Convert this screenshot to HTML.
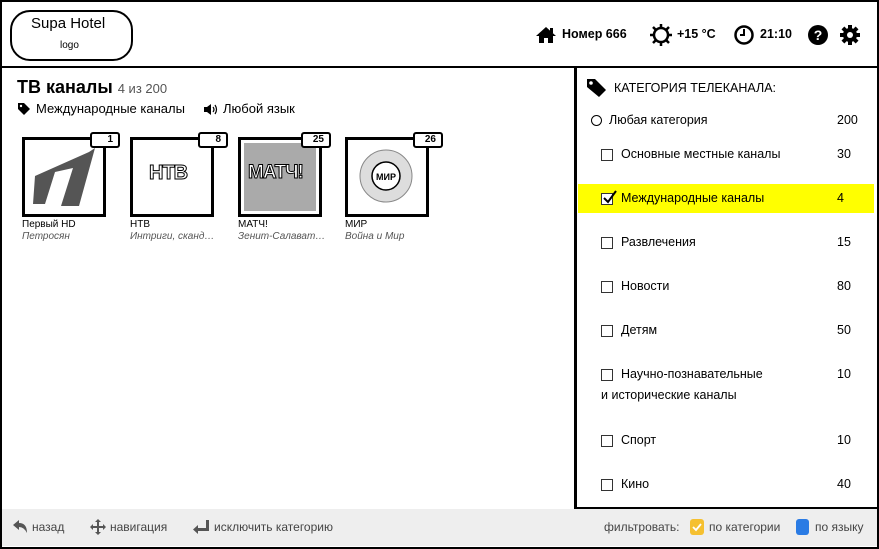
<!DOCTYPE html>
<html><head><meta charset="utf-8"><style>
*{margin:0;padding:0;box-sizing:border-box}
body{width:879px;height:549px;background:#fff;font-family:"Liberation Sans","DejaVu Sans",sans-serif;color:#000;position:relative;overflow:hidden}
.a{position:absolute;white-space:nowrap}
.frame{position:absolute;left:0;top:0;width:879px;height:549px;border:2px solid #000}
.box{position:absolute;border:2px solid #000}
.cnt{font-size:12.5px}
.cb{position:absolute;width:12px;height:12px;border:1.5px solid #333;background:#fff}
.tile{position:absolute;top:137px;width:84px;height:80px;border:3px solid #000;background:#fff}
.badge{position:absolute;top:132px;width:30px;height:16px;border:2px solid #000;border-radius:3px;background:#fff;font-size:10px;font-weight:bold;text-align:right;padding-right:5px;line-height:12px}
.cn{position:absolute;top:219px;font-size:10px}
.cs{position:absolute;top:231px;font-size:10px;font-style:italic;color:#555}
.ft{font-size:12px;color:#444}
</style></head><body>
<div class="frame"></div>
<div class="box" style="left:0;top:66px;width:879px;height:0;border-width:2px 0 0 0"></div>
<div class="box" style="left:10px;top:10px;width:123px;height:51px;border-radius:20px"></div>
<div class="a" style="left:31px;top:15px;font-size:15px">Supa Hotel</div>
<div class="a" style="left:60px;top:40px;font-size:10px">logo</div>

<svg class="a" style="left:535px;top:26px" width="22" height="18" viewBox="0 0 22 18"><path d="M11 1 L1 10 H4 V17 H9 V12 H13 V17 H18 V10 H21 Z" fill="#000"/><rect x="15" y="2" width="3" height="5" fill="#000"/></svg>
<div class="a" style="left:562px;top:27px;font-size:12.5px;font-weight:bold">Номер 666</div>
<svg class="a" style="left:648px;top:22px" width="26" height="26" viewBox="0 0 26 26"><circle cx="13" cy="13" r="7" fill="none" stroke="#000" stroke-width="2.5"/><g stroke="#000" stroke-width="2.5"><path d="M13 2v4M13 20v4M2 13h4M20 13h4M5 5l3 3M18 18l3 3M5 21l3-3M18 8l3-3"/></g></svg>
<div class="a" style="left:677px;top:27px;font-size:12.5px;font-weight:bold">+15 °C</div>
<svg class="a" style="left:733px;top:24px" width="22" height="22" viewBox="0 0 22 22"><circle cx="11" cy="11" r="8.5" fill="none" stroke="#000" stroke-width="2.5"/><path d="M11 5v6H7" fill="none" stroke="#000" stroke-width="2"/></svg>
<div class="a" style="left:760px;top:27px;font-size:12.5px;font-weight:bold">21:10</div>
<svg class="a" style="left:807px;top:24px" width="22" height="22" viewBox="0 0 22 22"><circle cx="11" cy="11" r="10" fill="#000"/><text x="11" y="16" font-size="14" font-weight="bold" text-anchor="middle" fill="#fff" font-family="Liberation Sans">?</text></svg>
<svg class="a" style="left:839px;top:24px" width="22" height="22" viewBox="0 0 22 22"><g fill="#000"><circle cx="11" cy="11" r="7"/><rect x="9" y="1" width="4" height="20"/><rect x="1" y="9" width="20" height="4"/><rect x="9" y="1" width="4" height="20" transform="rotate(45 11 11)"/><rect x="9" y="1" width="4" height="20" transform="rotate(-45 11 11)"/></g><circle cx="11" cy="11" r="3" fill="#fff"/></svg>

<div class="a" style="left:17px;top:77px;font-size:18px;font-weight:bold">ТВ каналы <span style="font-size:13px;font-weight:normal;color:#555">4 из 200</span></div>
<svg class="a" style="left:17px;top:102px" width="14" height="14" viewBox="0 0 14 14"><path d="M1 1H7L13 7L7 13L1 7Z" fill="#000"/><circle cx="4" cy="4" r="1.2" fill="#fff"/></svg>
<div class="a" style="left:36px;top:101px;font-size:13px">Международные каналы</div>
<svg class="a" style="left:203px;top:103px" width="16" height="13" viewBox="0 0 16 13"><path d="M1 4H4L8 1V12L4 9H1Z" fill="#000"/><path d="M10 4Q12 6.5 10 9M12 2Q15 6.5 12 11" fill="none" stroke="#000" stroke-width="1.2"/></svg>
<div class="a" style="left:223px;top:101px;font-size:13px">Любой язык</div>

<div class="tile" style="left:22px"><svg width="78" height="74" viewBox="0 0 78 74"><path d="M10 36L64 12L70 8L54 66L36 66L48 28L30 32L20 64L8 64Z" fill="#555"/></svg></div>
<div class="badge" style="left:90px">1</div>
<div class="cn" style="left:22px">Первый HD</div><div class="cs" style="left:22px">Петросян</div>

<div class="tile" style="left:130px"><div style="position:absolute;left:16px;top:22px;font-size:20px;font-weight:bold;color:#fff;-webkit-text-stroke:1px #000;letter-spacing:-1px">НТВ</div></div>
<div class="badge" style="left:198px">8</div>
<div class="cn" style="left:130px">НТВ</div><div class="cs" style="left:130px">Интриги, сканд…</div>

<div class="tile" style="left:238px"><div style="position:absolute;left:3px;top:3px;width:72px;height:68px;background:#aaa"></div><div style="position:absolute;left:7px;top:22px;font-size:19px;font-weight:bold;color:#fff;-webkit-text-stroke:1px #000;letter-spacing:-1px">МАТЧ!</div></div>
<div class="badge" style="left:301px">25</div>
<div class="cn" style="left:238px">МАТЧ!</div><div class="cs" style="left:238px">Зенит-Салават…</div>

<div class="tile" style="left:345px"><svg width="78" height="74" viewBox="0 0 78 74"><circle cx="38" cy="36" r="26" fill="#ddd" stroke="#888"/><circle cx="38" cy="36" r="14" fill="#fff" stroke="#000" stroke-width="1.5"/><text x="38" y="40" font-size="9" font-weight="bold" text-anchor="middle" font-family="Liberation Sans">МИР</text></svg></div>
<div class="badge" style="left:413px">26</div>
<div class="cn" style="left:345px">МИР</div><div class="cs" style="left:345px">Война и Мир</div>

<div class="box" style="left:574px;top:66px;width:305px;height:443px;border-width:0 2px 2px 3px"></div>
<svg class="a" style="left:586px;top:78px" width="22" height="20" viewBox="0 0 22 20"><path d="M1 1H9L20 12L13 19L1 9Z" fill="#000"/><circle cx="5" cy="5" r="1.8" fill="#fff"/></svg>
<div class="a" style="left:614px;top:81px;font-size:12.5px">КАТЕГОРИЯ ТЕЛЕКАНАЛА:</div>
<div class="a" style="left:591px;top:115px;width:11px;height:11px;border:1.5px solid #000;border-radius:50%"></div>
<div class="a cnt" style="left:609px;top:113px">Любая категория</div><div class="a cnt" style="left:837px;top:113px">200</div>

<div class="a" style="left:578px;top:184px;width:296px;height:29px;background:#ffff00"></div>

<div class="cb" style="left:601px;top:149px"></div><div class="a cnt" style="left:621px;top:147px">Основные местные каналы</div><div class="a cnt" style="left:837px;top:147px">30</div>
<div class="cb" style="left:601px;top:193px"></div><svg class="a" style="left:601px;top:189px" width="16" height="16"><path d="M3 9L7 13L15 2" fill="none" stroke="#000" stroke-width="2"/></svg><div class="a cnt" style="left:621px;top:191px">Международные каналы</div><div class="a cnt" style="left:837px;top:191px">4</div>
<div class="cb" style="left:601px;top:237px"></div><div class="a cnt" style="left:621px;top:235px">Развлечения</div><div class="a cnt" style="left:837px;top:235px">15</div>
<div class="cb" style="left:601px;top:281px"></div><div class="a cnt" style="left:621px;top:279px">Новости</div><div class="a cnt" style="left:837px;top:279px">80</div>
<div class="cb" style="left:601px;top:325px"></div><div class="a cnt" style="left:621px;top:323px">Детям</div><div class="a cnt" style="left:837px;top:323px">50</div>
<div class="cb" style="left:601px;top:369px"></div><div class="a cnt" style="left:621px;top:367px">Научно-познавательные</div><div class="a cnt" style="left:837px;top:367px">10</div>
<div class="a cnt" style="left:601px;top:388px">и исторические каналы</div>
<div class="cb" style="left:601px;top:435px"></div><div class="a cnt" style="left:621px;top:433px">Спорт</div><div class="a cnt" style="left:837px;top:433px">10</div>
<div class="cb" style="left:601px;top:479px"></div><div class="a cnt" style="left:621px;top:477px">Кино</div><div class="a cnt" style="left:837px;top:477px">40</div>

<div class="a" style="left:2px;top:509px;width:875px;height:37px;background:#eeeeee"></div>
<svg class="a" style="left:12px;top:519px" width="16" height="16" viewBox="0 0 16 16"><path d="M1 6L7 1V4Q15 4 15 14Q12 8 7 8V11Z" fill="#555"/></svg>
<div class="a ft" style="left:32px;top:520px">назад</div>
<svg class="a" style="left:90px;top:519px" width="16" height="16" viewBox="0 0 16 16"><path d="M8 0L11 3H9V7H13V5L16 8L13 11V9H9V13H11L8 16L5 13H7V9H3V11L0 8L3 5V7H7V3H5Z" fill="#555"/></svg>
<div class="a ft" style="left:110px;top:520px">навигация</div>
<svg class="a" style="left:192px;top:519px" width="18" height="16" viewBox="0 0 18 16"><path d="M14 1H17V12H6V15L1 10.5L6 6V9H14Z" fill="#555"/></svg>
<div class="a ft" style="left:214px;top:520px">исключить категорию</div>
<div class="a ft" style="left:604px;top:520px">фильтровать:</div>
<div class="a" style="left:690px;top:519px;width:14px;height:16px;background:#f5c030;border-radius:3px"></div>
<svg class="a" style="left:690px;top:519px" width="14" height="16"><path d="M3 8L6 11L11 5" fill="none" stroke="#fff" stroke-width="1.8"/></svg>
<div class="a ft" style="left:709px;top:520px">по категории</div>
<div class="a" style="left:796px;top:519px;width:13px;height:16px;background:#2a7be4;border-radius:3px"></div>
<div class="a ft" style="left:815px;top:520px">по языку</div>
</body></html>
